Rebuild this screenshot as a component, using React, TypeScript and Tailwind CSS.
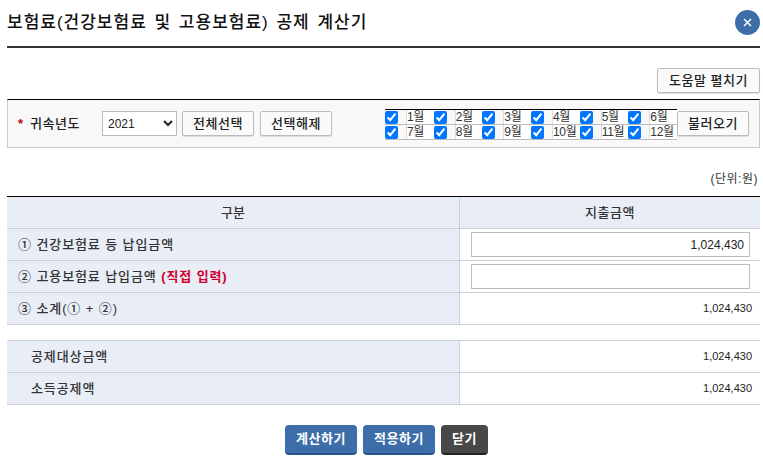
import React from "react";

const font = { fontFamily: '"Liberation Sans", "Noto Sans CJK KR", sans-serif' };

const months = ["1월", "2월", "3월", "4월", "5월", "6월", "7월", "8월", "9월", "10월", "11월", "12월"];

function GrayButton({ label, className }: { label: string; className: string }) {
  return (
    <button className={`bg-[#fafafa] border border-[#bbbbbb] rounded-[2px] text-[13px] font-medium text-[#222] tracking-[0.5px] leading-none shadow-[0_1px_1px_#ddd] ${className}`}>
      {label}
    </button>
  );
}

function Row({ label, indent, children }: { label: React.ReactNode; indent?: boolean; children: React.ReactNode }) {
  return (
    <div className="flex h-[32px] border-b border-[#c7d0de] box-border">
      <div className={`w-[452px] h-full bg-[#e8edf6] flex items-center text-[13px] font-medium text-[#333] tracking-[0.9px] ${indent ? "pl-[24px]" : "pl-[11px]"}`}>
        {label}
      </div>
      <div className="flex-1 border-l border-[#c7d0de] flex items-center justify-end pr-[8px] text-[11px] text-[#222]">
        {children}
      </div>
    </div>
  );
}

function AmountInput({ value }: { value: string }) {
  return (
    <input
      readOnly
      value={value}
      className="w-[279px] h-[25px] mr-[2px] border border-[#bbbbbb] bg-white text-right text-[12px] text-[#222] px-[5px] outline-none"
    />
  );
}

export default function App() {
  return (
    <div style={font} className="w-[763px] h-[460px] bg-white pl-[7px] pr-[3px] overflow-hidden">
      <div className="h-[48px] border-b-2 border-[#333] flex items-center justify-between box-border pb-[1px]">
        <h1 className="text-[17px] font-medium text-[#111] tracking-[1px] [word-spacing:2px]">보험료(건강보험료 및 고용보험료) 공제 계산기</h1>
        <button className="w-[25px] h-[25px] rounded-full bg-[#3d6ea9] flex items-center justify-center mb-[1px]">
          <svg width="9" height="9" viewBox="0 0 9 9" fill="none" stroke="white" strokeWidth="1.5">
            <path d="M1 1l7 7M8 1l-7 7" />
          </svg>
        </button>
      </div>

      <div className="flex justify-end mt-[20px]">
        <GrayButton label="도움말 펼치기" className="w-[103px] h-[25px]" />
      </div>

      <div className="h-[49px] mt-[6px] border border-[#cccccc] border-t-black bg-[#f8f8f8] flex items-center box-border text-[13px] text-[#222]">
        <span className="ml-[10px] w-[12px] text-[#c00020] font-bold">*</span>
        <span className="w-[72px] font-medium tracking-[0.5px]">귀속년도</span>
        <select defaultValue="2021" className="w-[75px] h-[25px] border border-[#bbbbbb] bg-white text-[12px] pl-[1px]">
          <option>2021</option>
        </select>
        <GrayButton label="전체선택" className="w-[72px] h-[25px] ml-[5px]" />
        <GrayButton label="선택해제" className="w-[72px] h-[25px] ml-[6px]" />
        <div className="ml-[53px] mt-[2px] w-[292px] grid grid-cols-6 border-t border-black">
          {months.map((m) => (
            <div key={m} className="flex h-[15px] border-b border-[#bbbbbb] items-center">
              <span className="w-[21px] h-full flex items-center bg-[#f8f8f8]">
                <input type="checkbox" defaultChecked className="w-[13px] h-[13px] m-0" />
              </span>
              <span className="flex-1 h-full bg-white border-l border-[#dddddd] text-[12px] leading-[14px] text-[#333] tracking-[-0.3px] whitespace-nowrap">{m}</span>
            </div>
          ))}
        </div>
        <GrayButton label="불러오기" className="w-[72px] h-[25px]" />
      </div>

      <div className="h-[48px] flex items-end justify-end pb-[8px] pr-[2px] text-[12px] tracking-[0.5px] text-[#333]">(단위:원)</div>

      <div className="border-t border-black">
        <div className="flex h-[32px] border-b border-[#c7d0de] box-border">
          <div className="w-[452px] h-full bg-[#e8edf6] flex items-center justify-center text-[13px] font-medium text-[#333]">구분</div>
          <div className="flex-1 border-l border-[#c7d0de] bg-[#e8edf6] flex items-center justify-center text-[13px] font-medium text-[#333] tracking-[0.5px]">지출금액</div>
        </div>
        <Row label="① 건강보험료 등 납입금액"><AmountInput value="1,024,430" /></Row>
        <Row label={<span>② 고용보험료 납입금액 <span className="text-[#d00030] font-bold">(직접 입력)</span></span>}><AmountInput value="" /></Row>
        <Row label="③ 소계(① + ②)">1,024,430</Row>
      </div>

      <div className="mt-[15px] border-t border-[#c7d0de]">
        <Row indent label="공제대상금액">1,024,430</Row>
        <Row indent label="소득공제액">1,024,430</Row>
      </div>

      <div className="flex justify-center gap-[6px] mt-[20px] pl-[6px] text-[13px] font-bold text-white tracking-[0.5px]">
        <button className="w-[72px] h-[30px] rounded-[4px] bg-[#3d6ea9] border-b-2 border-[#2c5383]">계산하기</button>
        <button className="w-[72px] h-[30px] rounded-[4px] bg-[#3d6ea9] border-b-2 border-[#2c5383]">적용하기</button>
        <button className="w-[47px] h-[30px] rounded-[4px] bg-[#484848] border-b-2 border-[#222]">닫기</button>
      </div>
    </div>
  );
}
